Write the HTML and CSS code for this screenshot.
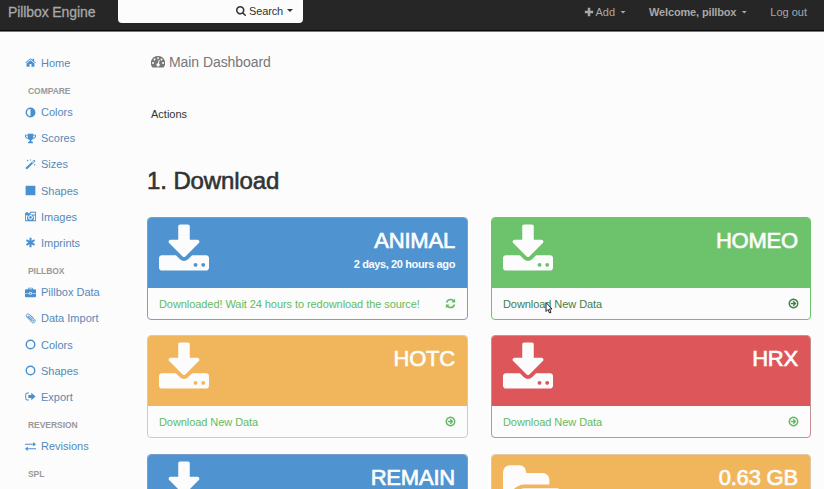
FILE: index.html
```html
<!DOCTYPE html>
<html lang="en">
<head>
<meta charset="utf-8">
<title>Pillbox Engine</title>
<link rel="stylesheet" href="styles.css">
</head>
<body>
<svg class="defs" aria-hidden="true">
  <symbol id="download" viewBox="0 0 1664 1536"><path d="M1280 1344q0-26-19-45t-45-19-45 19-19 45 19 45 45 19 45-19 19-45zm256 0q0-26-19-45t-45-19-45 19-19 45 19 45 45 19 45-19 19-45zm128-224v320q0 40-28 68t-68 28h-1472q-40 0-68-28t-28-68v-320q0-40 28-68t68-28h465l135 136q58 56 136 56t136-56l136-136h464q40 0 68 28t28 68zm-325-569q17 41-14 70l-448 448q-18 19-45 19t-45-19l-448-448q-31-29-14-70 17-39 59-39h256v-448q0-26 19-45t45-19h256q26 0 45 19t19 45v448h256q42 0 59 39z"/></symbol>
  <symbol id="folder" viewBox="0 0 1920 1536"><path d="M1879 952q0 31-31 66l-336 396q-43 51-120.5 86.5t-143.5 35.5h-1088q-34 0-60.5-13t-26.5-43q0-31 31-66l336-396q43-51 120.5-86.5t143.5-35.5h1088q34 0 60.5 13t26.5 43zm-343-344v160h-832q-94 0-197 47.5t-164 119.5l-337 396-5 6q0-4-.5-12.5t-.5-12.5v-960q0-92 66-158t158-66h320q92 0 158 66t66 158v32h544q92 0 158 66t66 158z"/></symbol>
  <symbol id="search" viewBox="0 0 1664 1664"><path d="M1152 704q0-185-131.5-316.5t-316.5-131.5-316.5 131.5-131.5 316.5 131.5 316.5 316.5 131.5 316.5-131.5 131.5-316.5zm512 832q0 52-38 90t-90 38q-54 0-90-38l-343-342q-179 124-399 124-143 0-273.5-55.5t-225-150-150-225-55.5-273.5 55.5-273.5 150-225 225-150 273.5-55.5 273.5 55.5 225 150 150 225 55.5 273.5q0 220-124 399l343 343q37 37 37 90z"/></symbol>
  <symbol id="plus" viewBox="0 0 12 12"><path d="M4.500 1h3v3.500H11v3H7.500V11h-3V7.500H1v-3h3.500z"/></symbol>
  <symbol id="gauge" viewBox="0 0 14 12"><path fill-rule="evenodd" d="M7 0a7 7 0 0 1 5.900 11q-.3.500-.8.500H1.900q-.5 0-.8-.5A7 7 0 0 1 7 0zM7 1.200a.9.900 0 1 0 .01 0zM3.500 2.600a.9.900 0 1 0 .01 0zM10.500 2.600a.9.900 0 1 0 .01 0zM2 6.100a.9.900 0 1 0 .01 0zM12 6.100a.9.900 0 1 0 .01 0zM7.800 3.800 6.900 7.300a1.600 1.600 0 1 0 1 .2l.8-3.400z"/></symbol>
  <symbol id="home" viewBox="0 0 14 12"><path d="M7 3.200 12 7.300V11q0 .5-.5.500H8.200V8H5.800v3.500H2.500Q2 11.500 2 11V7.300zM7 .6 9.600 2.700V1.200h2v3.200L13.700 6.100l-.7.800L7 2 1 6.900.3 6.100z"/></symbol>
  <symbol id="adjust" viewBox="0 0 14 14"><path fill-rule="evenodd" d="M7 .7a6.300 6.300 0 1 1 0 12.600A6.300 6.300 0 0 1 7 .7zm0 1.900a4.400 4.400 0 0 0 0 8.800z"/></symbol>
  <symbol id="trophy" viewBox="0 0 14 14"><path fill-rule="evenodd" d="M3.500 1h7v1.200H14v1.600q0 3-4.100 3.700Q9.300 8.600 8 9.100v1.300q2.200.2 2.400 2.600H3.600q.2-2.400 2.400-2.600V9.100Q4.700 8.600 4.100 7.500 0 6.800 0 3.800V2.200h3.500zM1.200 3.300v.5q0 1.800 2.500 2.500-.4-1.300-.3-3zm9.400 0q.1 1.700-.3 3 2.500-.7 2.500-2.500v-.5z"/></symbol>
  <symbol id="wand" viewBox="0 0 14 14"><path fill-rule="evenodd" d="M11.600.8 13.400 2.600 2.400 13.500.4 11.500zM9 4.200l.9.900 1.700-1.800-.9-.9zM3.500.5l.4 1.100 1.100.4-1.100.4-.4 1.100-.4-1.100L2 2l1.100-.4zM7 0l.4.900.9.400-.9.400L7 2.600l-.4-.9-.9-.4.900-.4zM12.400 6l.4 1 .9.400-.9.400-.4 1-.4-1-.9-.4.900-.4z"/></symbol>
  <symbol id="square" viewBox="0 0 14 14"><path d="M.8 1h12.400v12H.8z"/></symbol>
  <symbol id="camera" viewBox="0 0 14 14"><path fill-rule="evenodd" d="M0 3h1V1.600h3V3h1.500L6.500 1H14v12H0zm1.100 2v6.900h2.400q-2.100-3 .3-6.100H1.800V5zm6.100-2-.9 1.500h6.600V2.100H7.600zM7 5.200a3 3 0 1 0 .01 0zm3.300.6q2.200 3 .1 6.100h2.500V5.800zM7 6.500a1.700 1.700 0 1 1-.01 0z"/></symbol>
  <symbol id="asterisk" viewBox="0 0 14 14"><path d="M5.700 1h2.600v3.700L11.500 3l1.300 2.200L9.600 7l3.200 1.800-1.300 2.200-3.200-1.700V13H5.700V9.300L2.500 11 1.200 8.800 4.400 7 1.200 5.200 2.500 3l3.200 1.700z"/></symbol>
  <symbol id="briefcase" viewBox="0 0 14 14"><path fill-rule="evenodd" d="M4 3V1.500Q4 .8 4.700.8h4.600q.7 0 .7.700V3h2.800Q14 3 14 4.200v3.300H8.700v-.7H5.300v.7H0V4.200Q0 3 1.200 3zm1.200 0h3.600V2H5.200zM0 8.300h5.300v1.300h3.400V8.300H14v3.500q0 1.200-1.200 1.200H1.200Q0 13 0 11.800zm6.200-.7h1.600v1.200H6.200z"/></symbol>
  <symbol id="clip" viewBox="0 0 14 14"><path fill="none" stroke="currentColor" stroke-width="1.150" d="m10.500 6.400-5-4.600C3.200-.2.200 2.600 2.300 5l6 6.500c2.700 2.900 6.500-.9 3.700-3.600L6.600 2.800M3 3.700l6.500 6.600c.9.900 2.200-.4 1.300-1.300L5.500 4C4.600 3.200 3.600 4.300 4.400 5.100l4.200 4.200"/></symbol>
  <symbol id="ring" viewBox="0 0 14 14"><circle cx="7" cy="7" r="5.400" fill="none" stroke="currentColor" stroke-width="1.800"/></symbol>
  <symbol id="export" viewBox="0 0 14 14"><path d="M5 2v1.200H3Q1.500 3.200 1.500 4.800v4.400q0 1.600 1.500 1.600h2V12H3Q.3 12 .3 9.200V4.800Q.3 2 3 2zM8 2.200 13.500 7 8 11.800V9H4.300V5H8z"/></symbol>
  <symbol id="exchange" viewBox="0 0 14 14"><path d="M0 3.500h10.500V1.400L14 4.200 10.500 7V4.900H0zM14 9.100v1.400H3.500v2.100L0 9.800 3.500 7v2.100z"/></symbol>
  <symbol id="refresh" viewBox="0 0 14 14"><path d="M.9 5.800Q2.300.8 7 .8q2.500 0 4.300 1.700L12.900 1v4.800H8.200l1.600-1.700Q8.600 3 7 3 4.300 3 3.100 5.800zM13.100 8.200Q11.700 13.200 7 13.200q-2.500 0-4.300-1.700L1.100 13V8.200h4.700L4.200 9.900Q5.400 11 7 11q2.700 0 3.900-2.800z"/></symbol>
  <symbol id="arrow" viewBox="0 0 14 14"><path fill-rule="evenodd" d="M7 .7a6.300 6.300 0 1 1-.01 0zm0 1.800a4.500 4.500 0 1 0 .01 0zM7.200 3.500 10.800 7l-3.600 3.500L6 9.300l1.300-1.400H3.500V6.100h3.800L6 4.700z"/></symbol>
</svg>

<header class="navbar">
  <a class="brand">Pillbox Engine</a>
  <div class="search-box"><svg class="ic-search"><use href="#search"/></svg><span>Search</span><i class="caret"></i></div>
  <nav class="user-nav">
    <a class="nav-add"><svg class="ic-plus"><use href="#plus"/></svg><span>Add</span><i class="caret"></i></a>
    <a class="nav-user"><b>Welcome, pillbox</b><i class="caret"></i></a>
    <a>Log out</a>
  </nav>
</header>

<div class="layout">
  <aside class="sidebar">
    <a><svg><use href="#home"/></svg>Home</a>
    <h6>COMPARE</h6>
    <a><svg><use href="#adjust"/></svg>Colors</a>
    <a><svg><use href="#trophy"/></svg>Scores</a>
    <a><svg><use href="#wand"/></svg>Sizes</a>
    <a><svg><use href="#square"/></svg>Shapes</a>
    <a><svg><use href="#camera"/></svg>Images</a>
    <a><svg><use href="#asterisk"/></svg>Imprints</a>
    <h6>PILLBOX</h6>
    <a><svg><use href="#briefcase"/></svg>Pillbox Data</a>
    <a><svg><use href="#clip"/></svg>Data Import</a>
    <a><svg><use href="#ring"/></svg>Colors</a>
    <a><svg><use href="#ring"/></svg>Shapes</a>
    <a><svg><use href="#export"/></svg>Export</a>
    <h6>REVERSION</h6>
    <a><svg><use href="#exchange"/></svg>Revisions</a>
    <h6>SPL</h6>
  </aside>

  <main class="content">
    <h1><svg><use href="#gauge"/></svg>Main Dashboard</h1>
    <p class="actions">Actions</p>
    <h2>1. Download</h2>
    <div class="cards">
      <section class="card blue">
        <div class="head"><svg class="big"><use href="#download"/></svg><div class="info"><strong>ANIMAL</strong><b>2 days, 20 hours ago</b></div></div>
        <div class="foot"><span class="wait">Downloaded! Wait 24 hours to redownload the source!</span><svg><use href="#refresh"/></svg></div>
      </section>
      <section class="card green">
        <div class="head"><svg class="big"><use href="#download"/></svg><div class="info"><strong>HOMEO</strong></div></div>
        <div class="foot hovered"><span>Download New Data</span><svg><use href="#arrow"/></svg>
          <svg class="cursor" viewBox="0 0 8 12"><path d="M1 .5v9l2-2 1.500 3.500 1.500-.7L4.500 7H7z"/></svg></div>
      </section>
      <section class="card amber">
        <div class="head"><svg class="big"><use href="#download"/></svg><div class="info"><strong>HOTC</strong></div></div>
        <div class="foot"><span>Download New Data</span><svg><use href="#arrow"/></svg></div>
      </section>
      <section class="card red">
        <div class="head"><svg class="big"><use href="#download"/></svg><div class="info"><strong>HRX</strong></div></div>
        <div class="foot"><span>Download New Data</span><svg><use href="#arrow"/></svg></div>
      </section>
      <section class="card blue">
        <div class="head"><svg class="big"><use href="#download"/></svg><div class="info"><strong>REMAIN</strong></div></div>
      </section>
      <section class="card amber">
        <div class="head"><svg class="big wide"><use href="#folder"/></svg><div class="info"><strong>0.63 GB</strong></div></div>
      </section>
    </div>
  </main>
</div>
</body>
</html>
```
FILE: styles.css
```css
* { box-sizing: border-box; }
html, body { height: 100%; }
body {
  margin: 0;
  overflow: hidden;
  background: #fcfcfc;
  color: #333;
  font: 11px/16px "Liberation Sans", Arial, sans-serif;
}
svg { fill: currentColor; flex: none; }
.defs { display: none; }

.navbar {
  display: flex;
  height: 32px;
  background: #262626;
  border-bottom: 1px solid #777;
  box-shadow: inset 0 -1px #080808;
  color: #a8a8a8;
}
.brand { width: 118px; padding: 3px 0 0 8px; font-size: 14px; line-height: 18px; letter-spacing: -.1px; white-space: nowrap; -webkit-text-stroke: .3px; }
.search-box {
  display: flex;
  align-items: center;
  justify-content: flex-end;
  width: 185px;
  height: 23px;
  padding: 0 10px 2px 0;
  background: #fcfcfc;
  border-radius: 0 0 4px 4px;
  color: #333;
}
.search-box span { letter-spacing: -.15px; }
.ic-search { width: 10px; height: 10px; margin-right: 3px; }
.caret { width: 6px; height: 3px; margin-left: 4px; background: currentColor; clip-path: polygon(0 0, 100% 0, 50% 100%); }
.user-nav { display: flex; gap: 23px; margin-left: auto; padding: 4px 17px 0 0; height: 20px; }
.user-nav a { display: flex; align-items: center; }
.nav-user b { letter-spacing: -.15px; }
.ic-plus { width: 10px; height: 10px; margin-right: 1px; }
.user-nav .caret { margin-left: 5px; }

.layout { display: flex; height: 457px; overflow: hidden; }
.sidebar { width: 147px; padding: 17.600px 0 0 25px; color: #5589b9; }
.sidebar a { display: flex; align-items: center; height: 26.150px; }
.sidebar a svg { width: 11px; height: 11px; margin-right: 5px; color: #4a90cf; }
.sidebar h6 { height: 23.300px; margin: 0; padding: 9px 0 0 3px; color: #999; font-size: 8.500px; line-height: 12px; letter-spacing: -.05px; }

.content { width: 664px; }
h1 { display: flex; align-items: center; height: 20px; margin: 20px 0 0 4px; color: #777; font-weight: 400; font-size: 14px; line-height: 20px; letter-spacing: -.07px; }
h1 svg { width: 14px; height: 12px; margin-right: 4px; }
.actions { height: 16px; margin: 34px 0 0 4px; }
h2 { height: 28px; margin: 45px 0 0; font-size: 24px; line-height: 28px; letter-spacing: -.1px; font-weight: 400; -webkit-text-stroke: .6px; }
.cards { display: grid; grid-template-columns: 321px 320px; column-gap: 23px; row-gap: 15.400px; margin-top: 22px; }
.card { height: 103px; border: 1px solid var(--edge); border-radius: 4px; overflow: hidden; }
.blue { --main: #4f94d0; --edge: #7d9fc7; }
.green { --main: #6dc26c; --edge: #6dc26c; }
.amber { --main: #f1b55b; --edge: #e0c9a9; }
.red { --main: #dc565a; --edge: #c78f91; }
.head { display: flex; justify-content: space-between; height: 70px; padding: 6px 12px 0 11px; background: var(--main); color: #fcfcfc; }
.big { width: 50px; height: 47px; }
.wide { width: 58px; }
.info { text-align: right; }
.info strong { display: block; padding-top: 4px; font-size: 22px; line-height: 26px; letter-spacing: -.2px; font-weight: 400; -webkit-text-stroke: .7px; }
.info b { display: block; margin-top: 3px; line-height: 14px; font-size: 11px; letter-spacing: -.38px; }
.foot { position: relative; display: flex; align-items: center; justify-content: space-between; height: 31px; padding: 0 11px; color: #62bb62; letter-spacing: -.07px; }
.foot svg { width: 11px; height: 11px; }
.hovered { color: #3f8049; }
.foot .cursor { position: absolute; left: 53px; top: 14px; width: 8px; height: 12px; fill: #fff; stroke: #222; stroke-width: 1; }
```
